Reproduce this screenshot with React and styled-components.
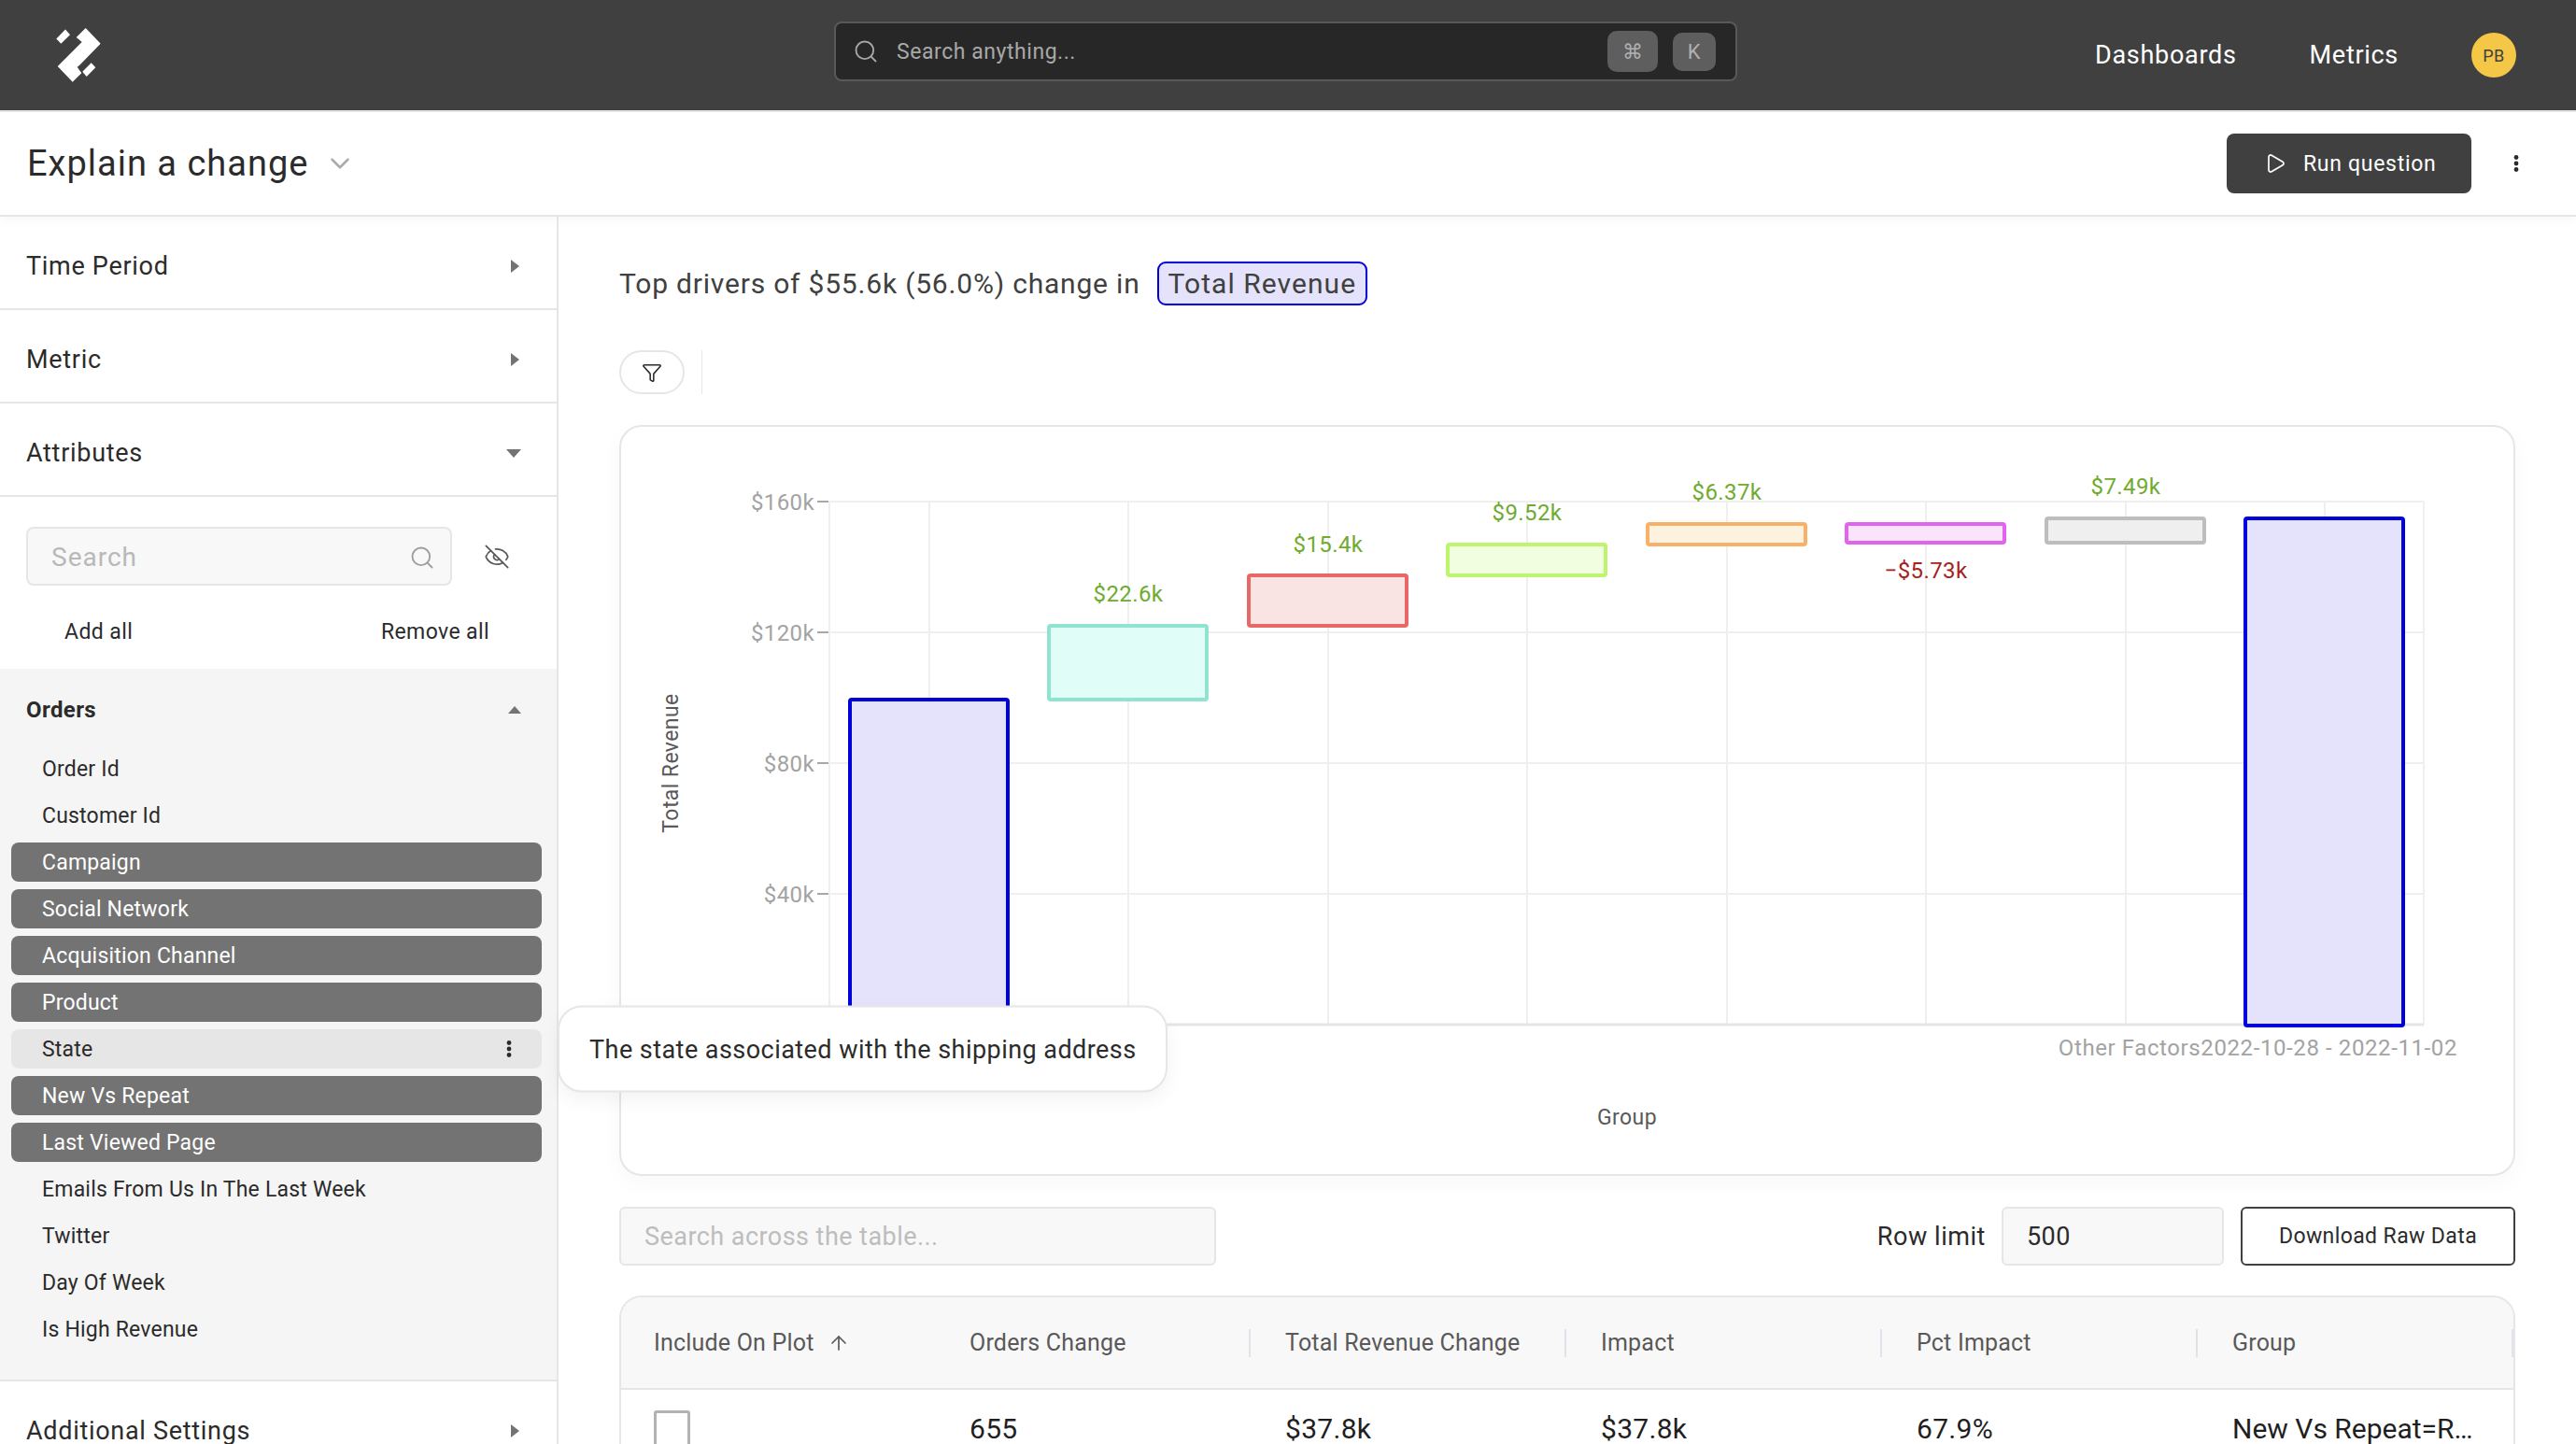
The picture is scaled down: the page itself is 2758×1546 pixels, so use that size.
import React from "react";
import styled, { createGlobalStyle } from "styled-components";
import { ArrowUp, ChevronDown, EyeOff, Filter, Play, Search } from "lucide-react";

const GlobalStyle = createGlobalStyle`
  html, body {
    margin: 0;
    background: #fff;
  }
  body {
    font-family: Roboto, "Liberation Sans", sans-serif;
    color: #2b2b2b;
  }
  * {
    box-sizing: border-box;
  }
`;

const Page = styled.div`
  width: 2758px;
  height: 1546px;
  overflow: hidden;
  display: flex;
  flex-direction: column;
`;

/* top bar */
const Header = styled.header`
  flex: none;
  height: 120px;
  display: grid;
  grid-template-columns: 893px 967px 1fr;
  align-items: center;
  background: #404040;
  border-bottom: 2px solid #e6e6e6;
`;

const LogoBox = styled.div`
  padding-left: 30px;
  display: flex;
  svg {
    display: block;
  }
`;

const GlobalSearch = styled.div`
  align-self: start;
  margin-top: 23px;
  height: 64px;
  display: flex;
  align-items: center;
  padding: 0 21px 0 18px;
  background: #282727;
  border: 2px solid #595959;
  border-radius: 8px;
  color: #a8a8a8;
  font-size: 23px;
  letter-spacing: 0.55px;
  svg {
    margin-right: 19px;
  }
`;

const SearchHint = styled.span`
  flex: 1;
`;

const KeyCap = styled.span`
  width: ${(p) => p.$w}px;
  height: ${(p) => p.$h}px;
  margin-left: ${(p) => p.$ml || 0}px;
  display: flex;
  align-items: center;
  justify-content: center;
  background: #5e5e5e;
  border-radius: 10px;
  color: #b0b0b0;
  font-size: 22px;
`;

const Nav = styled.nav`
  display: flex;
  align-items: center;
  justify-content: flex-end;
  gap: 78px;
  padding-right: 64px;
`;

const NavLink = styled.a`
  color: #fff;
  font-size: 27px;
  letter-spacing: 0.7px;
`;

const Avatar = styled.div`
  width: 48px;
  height: 48px;
  border-radius: 50%;
  display: flex;
  align-items: center;
  justify-content: center;
  background: #f5c747;
  color: #404040;
  font-size: 18px;
  letter-spacing: 0.5px;
`;

/* title row */
const TitleBar = styled.div`
  flex: none;
  position: relative;
  height: 112px;
  display: flex;
  align-items: center;
  padding: 0 54px 0 29px;
  border-bottom: 2px solid #e6e6e6;
  box-shadow: 0 4px 12px rgba(0, 0, 0, 0.03);
`;

const PageTitle = styled.h1`
  margin: 0;
  font-size: 38px;
  font-weight: 400;
  letter-spacing: 1px;
  color: #2b2b2b;
`;

const TitleChevron = styled(ChevronDown)`
  margin-left: 17px;
  color: #ababab;
`;

const RunButton = styled.button`
  margin-left: auto;
  width: 262px;
  height: 64px;
  display: flex;
  align-items: center;
  padding: 0 0 0 40px;
  gap: 18px;
  background: #404040;
  border: 0;
  border-radius: 8px;
  color: #fff;
  font-family: inherit;
  font-size: 23px;
  letter-spacing: 0.7px;
`;

const DotsSvg = styled.svg`
  flex: none;
  margin-left: ${(p) => p.$ml || 0}px;
  color: #2b2b2b;
`;

const Dots = ({ ml, h = 18 }) => (
  <DotsSvg $ml={ml} width="20" height={h} viewBox="0 0 20 18" fill="currentColor">
    <circle cx="10" cy="2.5" r="2.4" />
    <circle cx="10" cy="9" r="2.4" />
    <circle cx="10" cy="15.5" r="2.4" />
  </DotsSvg>
);

const Body = styled.div`
  flex: 1;
  display: flex;
  min-height: 0;
`;

/* left panel */
const Sidebar = styled.aside`
  flex: none;
  position: relative;
  z-index: 2;
  width: 598px;
  border-right: 2px solid #e6e6e6;
`;

const SectionRow = styled.div`
  height: 100px;
  display: flex;
  align-items: center;
  justify-content: space-between;
  padding: 8px 38px 0 28px;
  border-bottom: 2px solid #e6e6e6;
  font-size: 27px;
  letter-spacing: 0.7px;
`;

const Caret = styled.span`
  width: 0;
  height: 0;
  flex: none;
  ${(p) =>
    p.$dir === "right" &&
    `border-top: 7px solid transparent; border-bottom: 7px solid transparent; border-left: 9px solid #737373; margin-right: 2px;`}
  ${(p) =>
    p.$dir === "down" &&
    `border-left: 8px solid transparent; border-right: 8px solid transparent; border-top: 9px solid #737373;`}
  ${(p) =>
    p.$dir === "up" &&
    `border-left: 7px solid transparent; border-right: 7px solid transparent; border-bottom: 8px solid #737373;`}
`;

const AttrTools = styled.div`
  height: 184px;
  padding: 32px 28px 0;
`;

const SearchLine = styled.div`
  display: flex;
  align-items: center;
`;

const AttrSearch = styled.div`
  width: 456px;
  height: 63px;
  display: flex;
  align-items: center;
  justify-content: space-between;
  padding: 2px 16px 0 25px;
  background: #f8f8f8;
  border: 2px solid #e6e6e6;
  border-radius: 8px;
  color: #b8b8b8;
  font-size: 28px;
  letter-spacing: 1px;
`;

const EyeIcon = styled(EyeOff)`
  margin-left: 34px;
  color: #595959;
`;

const BulkActions = styled.div`
  display: flex;
  justify-content: space-between;
  padding: 36px 44px 0 41px;
  font-size: 23px;
  letter-spacing: 0.4px;
`;

const Group = styled.div`
  height: 763px;
  padding: 0 16px 0 12px;
  background: #f5f5f5;
  border-bottom: 2px solid #e6e6e6;
`;

const GroupHead = styled.div`
  height: 86px;
  padding: 2px 22px 0 16px;
  display: flex;
  align-items: center;
  justify-content: space-between;
  font-size: 24px;
  font-weight: 700;
  letter-spacing: 0.4px;
`;

const AttrItem = styled.div`
  position: relative;
  height: 42px;
  margin-bottom: 8px;
  display: flex;
  align-items: center;
  justify-content: space-between;
  padding: 0 25px 0 33px;
  border-radius: 8px;
  font-size: 23px;
  letter-spacing: 0.2px;
  color: ${(p) => (p.$selected ? "#fff" : "#2b2b2b")};
  background: ${(p) => (p.$selected ? "#737373" : p.$hover ? "#e6e6e6" : "transparent")};
`;

const Tooltip = styled.div`
  position: absolute;
  left: calc(100% + 17px);
  top: 50%;
  transform: translateY(-50%);
  width: 653px;
  height: 93px;
  display: flex;
  align-items: center;
  padding: 0 32px;
  background: #fff;
  border: 2px solid #e6e6e6;
  border-radius: 26px;
  box-shadow: 0 8px 20px rgba(0, 0, 0, 0.05);
  color: #2b2b2b;
  font-size: 27px;
  letter-spacing: 0.45px;
  white-space: nowrap;
`;

/* right panel */
const Main = styled.main`
  flex: 1;
  min-width: 0;
  padding: 48px 65px 0;
`;

const Headline = styled.div`
  height: 47px;
  display: flex;
  align-items: center;
  font-size: 30px;
  letter-spacing: 0.8px;
  color: #404040;
`;

const MetricChip = styled.span`
  height: 47px;
  margin-left: 18px;
  display: flex;
  align-items: center;
  padding: 0 10px;
  background: #e5e3fb;
  border: 2px solid #0000dd;
  border-radius: 9px;
  letter-spacing: 1.05px;
`;

const FilterRow = styled.div`
  margin-top: 48px;
  display: flex;
  gap: 18px;
`;

const FilterButton = styled.button`
  width: 70px;
  height: 47px;
  display: flex;
  align-items: center;
  justify-content: center;
  padding: 0;
  background: #fff;
  border: 2px solid #e6e6e6;
  border-radius: 24px;
  color: #2b2b2b;
`;

const FilterDivider = styled.div`
  width: 1px;
  background: #e6e6e6;
`;

const ChartCard = styled.section`
  margin-top: 33px;
  height: 804px;
  background: #fff;
  border: 2px solid #e6e6e6;
  border-radius: 24px;
  box-shadow: 0 8px 24px rgba(0, 0, 0, 0.03);
  svg {
    display: block;
  }
`;

const GridLine = styled.line`
  stroke: ${(p) => p.$color || "#efefef"};
  stroke-width: ${(p) => p.$w || 2}px;
`;

const ChartText = styled.text`
  font-family: Roboto, "Liberation Sans", sans-serif;
  font-size: ${(p) => p.$size || 24}px;
  letter-spacing: ${(p) => p.$ls ?? 0.4}px;
  fill: ${(p) => p.$color || "#a3a3a3"};
`;

const TableTools = styled.div`
  margin-top: 33px;
  height: 63px;
  display: flex;
  align-items: center;
`;

const Field = styled.div`
  width: ${(p) => p.$w}px;
  height: 63px;
  display: flex;
  align-items: center;
  padding: 0 25px;
  background: #f8f8f8;
  border: 2px solid #e6e6e6;
  border-radius: 6px;
  font-size: 27px;
  letter-spacing: 0.45px;
  color: ${(p) => (p.$placeholder ? "#bdbdbd" : "#2b2b2b")};
`;

const RowLimit = styled.label`
  margin-left: auto;
  margin-right: 17px;
  font-size: 27px;
  letter-spacing: 0.55px;
`;

const DownloadButton = styled.button`
  width: 294px;
  height: 63px;
  margin-left: 18px;
  background: #fff;
  border: 2px solid #404040;
  border-radius: 6px;
  color: #2b2b2b;
  font-family: inherit;
  font-size: 23px;
  letter-spacing: 0.4px;
`;

const Table = styled.div`
  margin-top: 32px;
  border: 2px solid #e6e6e6;
  border-bottom: 0;
  border-radius: 24px 24px 0 0;
  overflow: hidden;
`;

const TableRow = styled.div`
  display: grid;
  grid-template-columns: repeat(6, 338px);
  height: ${(p) => p.$h}px;
  align-items: center;
  background: ${(p) => p.$bg || "#fff"};
  border-bottom: ${(p) => (p.$head ? "2px solid #e6e6e6" : 0)};
`;

const HeadCell = styled.div`
  position: relative;
  height: 30px;
  display: flex;
  align-items: center;
  gap: 14px;
  padding-left: 35px;
  font-size: 25px;
  letter-spacing: 0.2px;
  color: #595959;
  &::after {
    content: "";
    display: ${(p) => (p.$sep ? "block" : "none")};
    position: absolute;
    right: 2px;
    top: 0;
    width: 2px;
    height: 30px;
    background: #e1e3ea;
  }
`;

const Cell = styled.div`
  padding: 0 38px 0 35px;
  font-size: 30px;
  letter-spacing: ${(p) => p.$ls ?? 0.3}px;
  color: #1f1f1f;
  white-space: nowrap;
  overflow: hidden;
  text-overflow: ellipsis;
`;

const Checkbox = styled.span`
  display: block;
  width: 39px;
  height: 40px;
  border: 3px solid #b3b3b3;
  border-radius: 3px;
  background: #fff;
`;

const attributes = [
  { name: "Order Id" },
  { name: "Customer Id" },
  { name: "Campaign", selected: true },
  { name: "Social Network", selected: true },
  { name: "Acquisition Channel", selected: true },
  { name: "Product", selected: true },
  { name: "State", hover: true },
  { name: "New Vs Repeat", selected: true },
  { name: "Last Viewed Page", selected: true },
  { name: "Emails From Us In The Last Week" },
  { name: "Twitter" },
  { name: "Day Of Week" },
  { name: "Is High Revenue" },
];

const yTicks = [
  { label: "$160k", y: 537 },
  { label: "$120k", y: 677 },
  { label: "$80k", y: 817 },
  { label: "$40k", y: 957 },
];

const gridX = [888, 995, 1208, 1422, 1635, 1849, 2062, 2276, 2489, 2595];

const bars = [
  { x: 910, top: 749, bottom: 1098, stroke: "#0000dd", fill: "#e5e3fb" },
  { x: 1123, top: 670, bottom: 749, stroke: "#8fe3d0", fill: "#e1fdf7", label: "$22.6k", ly: 636 },
  { x: 1337, top: 616, bottom: 670, stroke: "#e86767", fill: "#f9e3e3", label: "$15.4k", ly: 583 },
  { x: 1550, top: 583, bottom: 616, stroke: "#bdf56f", fill: "#f1fee0", label: "$9.52k", ly: 549 },
  { x: 1764, top: 561, bottom: 583, stroke: "#f7b267", fill: "#fdf1e0", label: "$6.37k", ly: 527 },
  { x: 1977, top: 561, bottom: 581, stroke: "#e264ee", fill: "#fae3fb", label: "−$5.73k", ly: 611, negative: true },
  { x: 2191, top: 555, bottom: 581, stroke: "#bdbdbd", fill: "#efefef", label: "$7.49k", ly: 521 },
  { x: 2404, top: 555, bottom: 1098, stroke: "#0000dd", fill: "#e5e3fb" },
];

const columns = [
  "Include On Plot",
  "Orders Change",
  "Total Revenue Change",
  "Impact",
  "Pct Impact",
  "Group",
];

function Logo() {
  return (
    <svg width="110" height="100" viewBox="0 -1 110 100" fill="#fff">
      <polygon points="30.3,31.5 40,21.5 45,27.3 35.3,36.7" />
      <polygon points="61.7,20 77.7,36.7 55,60 52.7,61.7 57.3,68.3 47.7,77.7 31.7,61 57.7,35 51.7,30" />
      <polygon points="58.3,66.7 67.7,57.3 72.3,62.3 62.7,72" />
    </svg>
  );
}

function WaterfallChart() {
  return (
    <svg width="2026" height="800" viewBox="665 457 2026 800">
      {yTicks.map((t) => (
        <g key={t.label}>
          <GridLine x1="888" x2="2595" y1={t.y} y2={t.y} />
          <GridLine x1="875" x2="887" y1={t.y} y2={t.y} $color="#a8a8a8" />
          <ChartText x="872" y={t.y + 9} textAnchor="end">
            {t.label}
          </ChartText>
        </g>
      ))}
      {gridX.map((x) => (
        <GridLine key={x} x1={x} x2={x} y1="537" y2="1097" />
      ))}
      <GridLine x1="888" x2="2595" y1="1097" y2="1097" $color="#e6e6e6" $w={3} />
      {bars.map((b) => (
        <rect
          key={b.x}
          x={b.x}
          y={b.top}
          width="169"
          height={b.bottom - b.top}
          rx="2"
          fill={b.fill}
          stroke={b.stroke}
          strokeWidth="4"
        />
      ))}
      {bars
        .filter((b) => b.label)
        .map((b) => (
          <ChartText
            key={b.label}
            x={b.x + 85}
            y={b.ly + 8}
            textAnchor="middle"
            $color={b.negative ? "#a6231b" : "#6fab2f"}
          >
            {b.label}
          </ChartText>
        ))}
      <ChartText
        transform="rotate(-90 718 817)"
        x="718"
        y="825"
        textAnchor="middle"
        $size={23}
        $color="#595959"
      >
        Total Revenue
      </ChartText>
      <ChartText x="2631" y="1130" textAnchor="end" $size={24} $ls={0.6}>
        Other Factors2022-10-28 - 2022-11-02
      </ChartText>
      <ChartText x="1742" y="1204" textAnchor="middle" $size={23} $color="#595959">
        Group
      </ChartText>
    </svg>
  );
}

export default function App() {
  return (
    <Page>
      <GlobalStyle />
      <Header>
        <LogoBox>
          <Logo />
        </LogoBox>
        <GlobalSearch>
          <Search size={28} strokeWidth={1.6} />
          <SearchHint>Search anything...</SearchHint>
          <KeyCap $w={54} $h={44}>
            ⌘
          </KeyCap>
          <KeyCap $w={46} $h={41} $ml={16}>
            K
          </KeyCap>
        </GlobalSearch>
        <Nav>
          <NavLink>Dashboards</NavLink>
          <NavLink>Metrics</NavLink>
          <Avatar>PB</Avatar>
        </Nav>
      </Header>

      <TitleBar>
        <PageTitle>Explain a change</PageTitle>
        <TitleChevron size={34} strokeWidth={1.8} />
        <RunButton>
          <Play size={24} strokeWidth={1.7} />
          Run question
        </RunButton>
        <Dots ml={38} />
      </TitleBar>

      <Body>
        <Sidebar>
          <SectionRow>
            Time Period
            <Caret $dir="right" />
          </SectionRow>
          <SectionRow>
            Metric
            <Caret $dir="right" />
          </SectionRow>
          <SectionRow>
            Attributes
            <Caret $dir="down" />
          </SectionRow>
          <AttrTools>
            <SearchLine>
              <AttrSearch>
                Search
                <Search size={28} strokeWidth={1.6} color="#9e9e9e" />
              </AttrSearch>
              <EyeIcon size={28} strokeWidth={1.5} />
            </SearchLine>
            <BulkActions>
              <span>Add all</span>
              <span>Remove all</span>
            </BulkActions>
          </AttrTools>
          <Group>
            <GroupHead>
              Orders
              <Caret $dir="up" />
            </GroupHead>
            {attributes.map((a) => (
              <AttrItem key={a.name} $selected={a.selected} $hover={a.hover}>
                {a.name}
                {a.hover && <Dots />}
                {a.hover && <Tooltip>The state associated with the shipping address</Tooltip>}
              </AttrItem>
            ))}
          </Group>
          <SectionRow>
            Additional Settings
            <Caret $dir="right" />
          </SectionRow>
        </Sidebar>

        <Main>
          <Headline>
            Top drivers of $55.6k (56.0%) change in
            <MetricChip>Total Revenue</MetricChip>
          </Headline>
          <FilterRow>
            <FilterButton>
              <Filter size={22} strokeWidth={1.7} />
            </FilterButton>
            <FilterDivider />
          </FilterRow>
          <ChartCard>
            <WaterfallChart />
          </ChartCard>
          <TableTools>
            <Field $w={639} $placeholder>
              Search across the table...
            </Field>
            <RowLimit>Row limit</RowLimit>
            <Field $w={238}>500</Field>
            <DownloadButton>Download Raw Data</DownloadButton>
          </TableTools>
          <Table>
            <TableRow $h={99} $bg="#f8f8f8" $head>
              {columns.map((c, i) => (
                <HeadCell key={c} $sep={i > 0}>
                  {c}
                  {i === 0 && <ArrowUp size={24} strokeWidth={1.7} />}
                </HeadCell>
              ))}
            </TableRow>
            <TableRow $h={83}>
              <Cell>
                <Checkbox />
              </Cell>
              <Cell>655</Cell>
              <Cell>$37.8k</Cell>
              <Cell>$37.8k</Cell>
              <Cell>67.9%</Cell>
              <Cell $ls={0}>New Vs Repeat=Returning</Cell>
            </TableRow>
          </Table>
        </Main>
      </Body>
    </Page>
  );
}
